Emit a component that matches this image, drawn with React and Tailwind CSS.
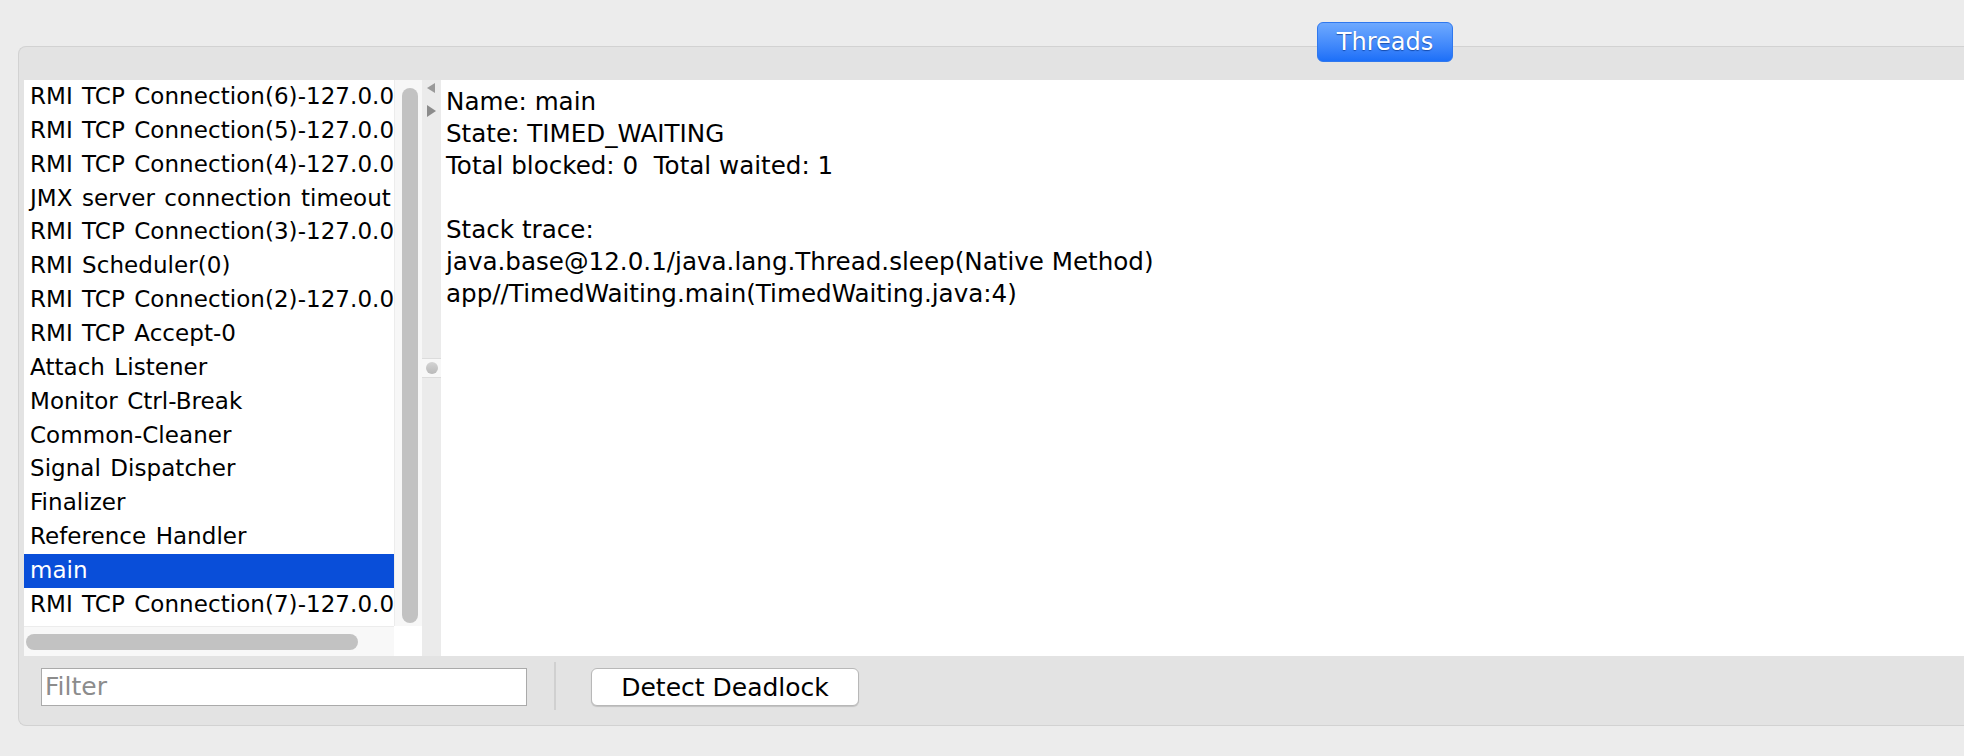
const threads = [
  'RMI TCP Connection(6)-127.0.0.1',
  'RMI TCP Connection(5)-127.0.0.1',
  'RMI TCP Connection(4)-127.0.0.1',
  'JMX server connection timeout 17',
  'RMI TCP Connection(3)-127.0.0.1',
  'RMI Scheduler(0)',
  'RMI TCP Connection(2)-127.0.0.1',
  'RMI TCP Accept-0',
  'Attach Listener',
  'Monitor Ctrl-Break',
  'Common-Cleaner',
  'Signal Dispatcher',
  'Finalizer',
  'Reference Handler',
  'main',
  'RMI TCP Connection(7)-127.0.0.1',
]

function ThreadList() {
  return (
    <div className="flex flex-col w-[398px] shrink-0">
      <div className="flex h-[546px]">
        {/* list rows */}
        <div className="w-[370px] bg-white overflow-hidden">
          {threads.map((t) => (
            <div
              key={t}
              className={
                t === 'main'
                  ? 'h-[33.86px] leading-[33.86px] pl-[6px] whitespace-nowrap text-[23px] tracking-[0.05px] [word-spacing:2px] bg-[#094ed9] text-white'
                  : 'h-[33.86px] leading-[33.86px] pl-[6px] whitespace-nowrap text-[23px] tracking-[0.05px] [word-spacing:2px] text-black'
              }
            >
              {t}
            </div>
          ))}
        </div>
        {/* vertical scrollbar */}
        <div className="w-[28px] bg-[#f7f7f7] border-l border-[#ececec] pt-[8px] pl-[7px]">
          <div className="w-[16px] h-[535px] rounded-full bg-[#c2c2c2]" />
        </div>
      </div>
      <div className="flex h-[30px]">
        {/* horizontal scrollbar */}
        <div className="w-[370px] bg-[#f8f8f8] border-t border-[#ececec] pt-[7px] pl-[2px]">
          <div className="w-[332px] h-[16px] rounded-full bg-[#c2c2c2]" />
        </div>
        <div className="w-[28px] bg-white" />
      </div>
    </div>
  )
}

function Divider() {
  return (
    <div className="w-[19px] shrink-0 bg-[#ebebeb] flex flex-col">
      <svg width="19" height="40" viewBox="0 0 19 40" className="mt-[2px]">
        <polygon points="13,1 13,11 5,6" fill="#9a9a9a" />
        <polygon points="5,23 5,35 14,29" fill="#8c8c8c" />
      </svg>
      <div className="mt-[236px] h-[20px] bg-[#f7f7f7] border-y border-[#dcdcdc] flex items-center justify-center">
        <div className="w-[12px] h-[12px] rounded-full bg-gradient-to-b from-[#d4d4d4] to-[#b9b9b9]" />
      </div>
    </div>
  )
}

function Details() {
  return (
    <div className="flex-1 bg-white pl-[5px] pt-[6px] text-[24.6px] leading-[32px] text-black whitespace-nowrap">
      <div>Name: main</div>
      <div>State: TIMED_WAITING</div>
      <div>Total blocked: 0&nbsp;&nbsp;Total waited: 1</div>
      <div>&nbsp;</div>
      <div>Stack trace:</div>
      <div>java.base@12.0.1/java.lang.Thread.sleep(Native Method)</div>
      <div>app//TimedWaiting.main(TimedWaiting.java:4)</div>
    </div>
  )
}

export default function App() {
  return (
    <div className="h-[756px] w-[1964px] overflow-hidden bg-[#ececec] pt-[22px] pl-[18px] font-['DejaVu_Sans',sans-serif]">
      <div className="relative z-10 ml-[1299px] -mb-[16px] w-[136px] h-[40px] rounded-[6px] border border-[#2f78ee] bg-gradient-to-b from-[#6ea9fe] to-[#1c6ff8] flex items-center justify-center text-white text-[24px] [text-shadow:0_1px_1px_rgba(0,40,120,0.6)]">
        Threads
      </div>
      <div className="h-[680px] rounded-l-[8px] border-t border-l border-b border-[#d2d2d2] bg-[#e3e3e3] flex flex-col">
        <div className="h-[33px]" />
        <div className="flex h-[576px] pl-[5px]">
          <ThreadList />
          <Divider />
          <Details />
        </div>
        <div className="flex items-start pt-[12px] pl-[22px]">
          <div className="w-[486px] h-[38px] border border-[#aaaaaa] bg-white pl-[3px] text-[25px] leading-[36px] text-[#8c8c8c]">
            Filter
          </div>
          <div className="ml-[27px] -mt-[6px] w-[2px] h-[48px] bg-[#d0d0d0]" />
          <button className="ml-[35px] w-[268px] h-[38px] rounded-[6px] border border-[#b8b8b8] bg-white text-[25px] text-black shadow-[0_1px_1px_rgba(0,0,0,0.15)]">
            Detect Deadlock
          </button>
        </div>
      </div>
    </div>
  )
}
